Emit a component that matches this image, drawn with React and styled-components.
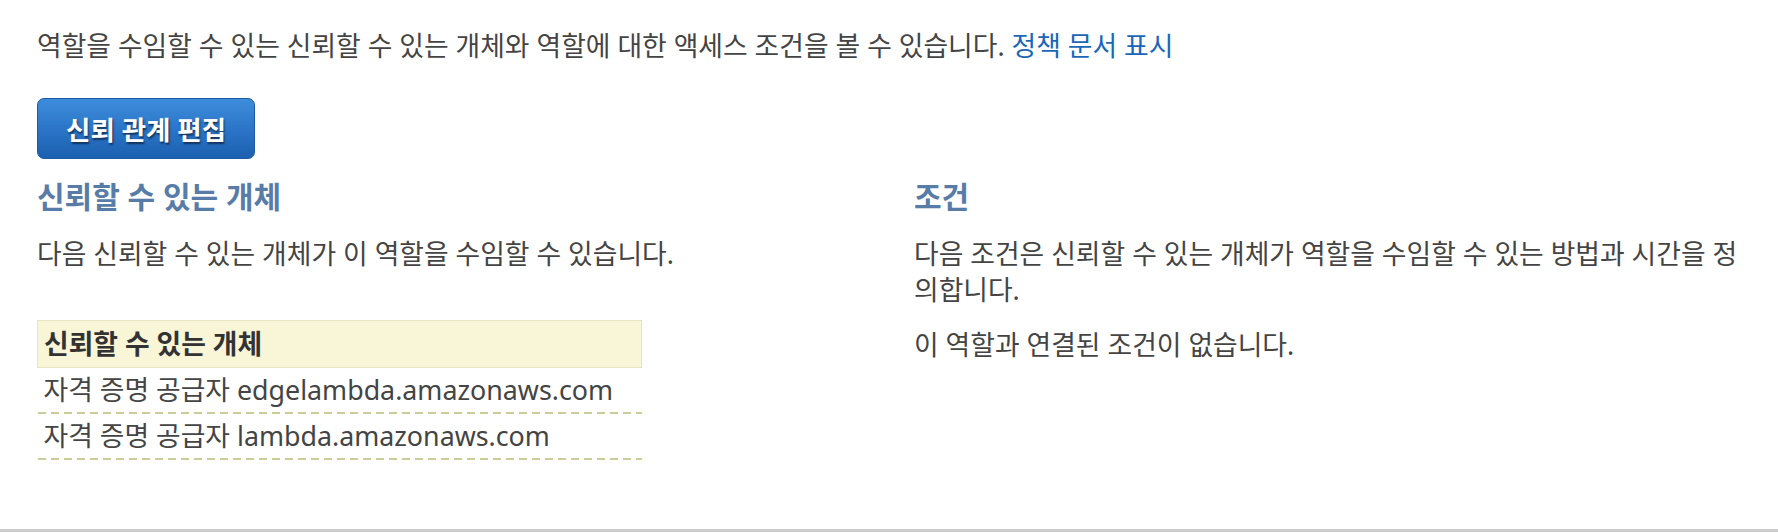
import React from "react";
import styled, { createGlobalStyle } from "styled-components";

const GlobalStyle = createGlobalStyle`
  html, body {
    margin: 0;
    padding: 0;
    background: #fff;
  }
  body {
    font-family: "Noto Sans", "Noto Sans CJK KR", sans-serif;
    font-size: 26.8px;
    line-height: 36px;
    color: #444;
  }
`;

const principals = [
  "자격 증명 공급자 edgelambda.amazonaws.com",
  "자격 증명 공급자 lambda.amazonaws.com",
];

const App = () => {
  return (
    <>
      <GlobalStyle />
      <Page>
        <Intro>
          역할을 수임할 수 있는 신뢰할 수 있는 개체와 역할에 대한 액세스 조건을 볼 수 있습니다.{" "}
          <Link href="#">정책 문서 표시</Link>
        </Intro>
        <Button type="button">신뢰 관계 편집</Button>
        <Columns>
          <Column>
            <Heading>신뢰할 수 있는 개체</Heading>
            <Text>다음 신뢰할 수 있는 개체가 이 역할을 수임할 수 있습니다.</Text>
            <Table>
              <thead>
                <tr>
                  <HeadCell>신뢰할 수 있는 개체</HeadCell>
                </tr>
              </thead>
              <tbody>
                {principals.map((p) => (
                  <tr key={p}>
                    <Cell>{p}</Cell>
                  </tr>
                ))}
              </tbody>
            </Table>
          </Column>
          <Column right>
            <Heading>조건</Heading>
            <Text>
              다음 조건은 신뢰할 수 있는 개체가 역할을 수임할 수 있는 방법과 시간을 정의합니다.
            </Text>
            <Text>이 역할과 연결된 조건이 없습니다.</Text>
          </Column>
        </Columns>
      </Page>
    </>
  );
};

const Page = styled.div`
  box-sizing: border-box;
  height: 532px;
  padding: 28px 37px 0;
  border-bottom: 3px solid #cccccc;
`;
const Intro = styled.p`
  margin: 0;
`;
const Link = styled.a`
  color: #1a67b8;
  text-decoration: none;
`;
const Button = styled.button`
  display: block;
  box-sizing: border-box;
  margin-top: 34px;
  height: 61px;
  padding: 0 28px;
  border: 1px solid #1a5aa6;
  border-radius: 7px;
  background: linear-gradient(to bottom, #3d8ddb 0%, #2a73c6 55%, #1c60b0 100%);
  color: #fff;
  font-family: inherit;
  font-size: 26.5px;
  font-weight: bold;
  text-shadow: 1px 2px 2px rgba(0, 0, 0, 0.55);
  cursor: pointer;
`;
const Columns = styled.div`
  display: grid;
  grid-template-columns: 1fr 1fr;
  margin-top: 20px;
`;
const Column = styled.div`
  padding-left: ${({ right }) => (right ? "25px" : "0")};
`;
const Heading = styled.h3`
  margin: 0;
  font-size: 30px;
  line-height: 36px;
  font-weight: bold;
  color: #587ca8;
`;
const Text = styled.p`
  margin: 21px 0 0;
  & + & {
    margin-top: 19px;
  }
`;
const Table = styled.table`
  width: 605px;
  margin-top: 48px;
  border-collapse: collapse;
`;
const HeadCell = styled.th`
  box-sizing: border-box;
  height: 47px;
  padding: 0 6px;
  text-align: left;
  font-weight: bold;
  color: #333;
  background: #f9f6d8;
  border: 1px solid #e8e4bd;
`;
const Cell = styled.td`
  height: 44px;
  padding: 0 6px 2px;
  vertical-align: middle;
  background-image: repeating-linear-gradient(
    to right,
    #cccc99 0 8px,
    transparent 8px 13px
  );
  background-size: 100% 2px;
  background-repeat: no-repeat;
  background-position: left bottom;
`;

export default App;
